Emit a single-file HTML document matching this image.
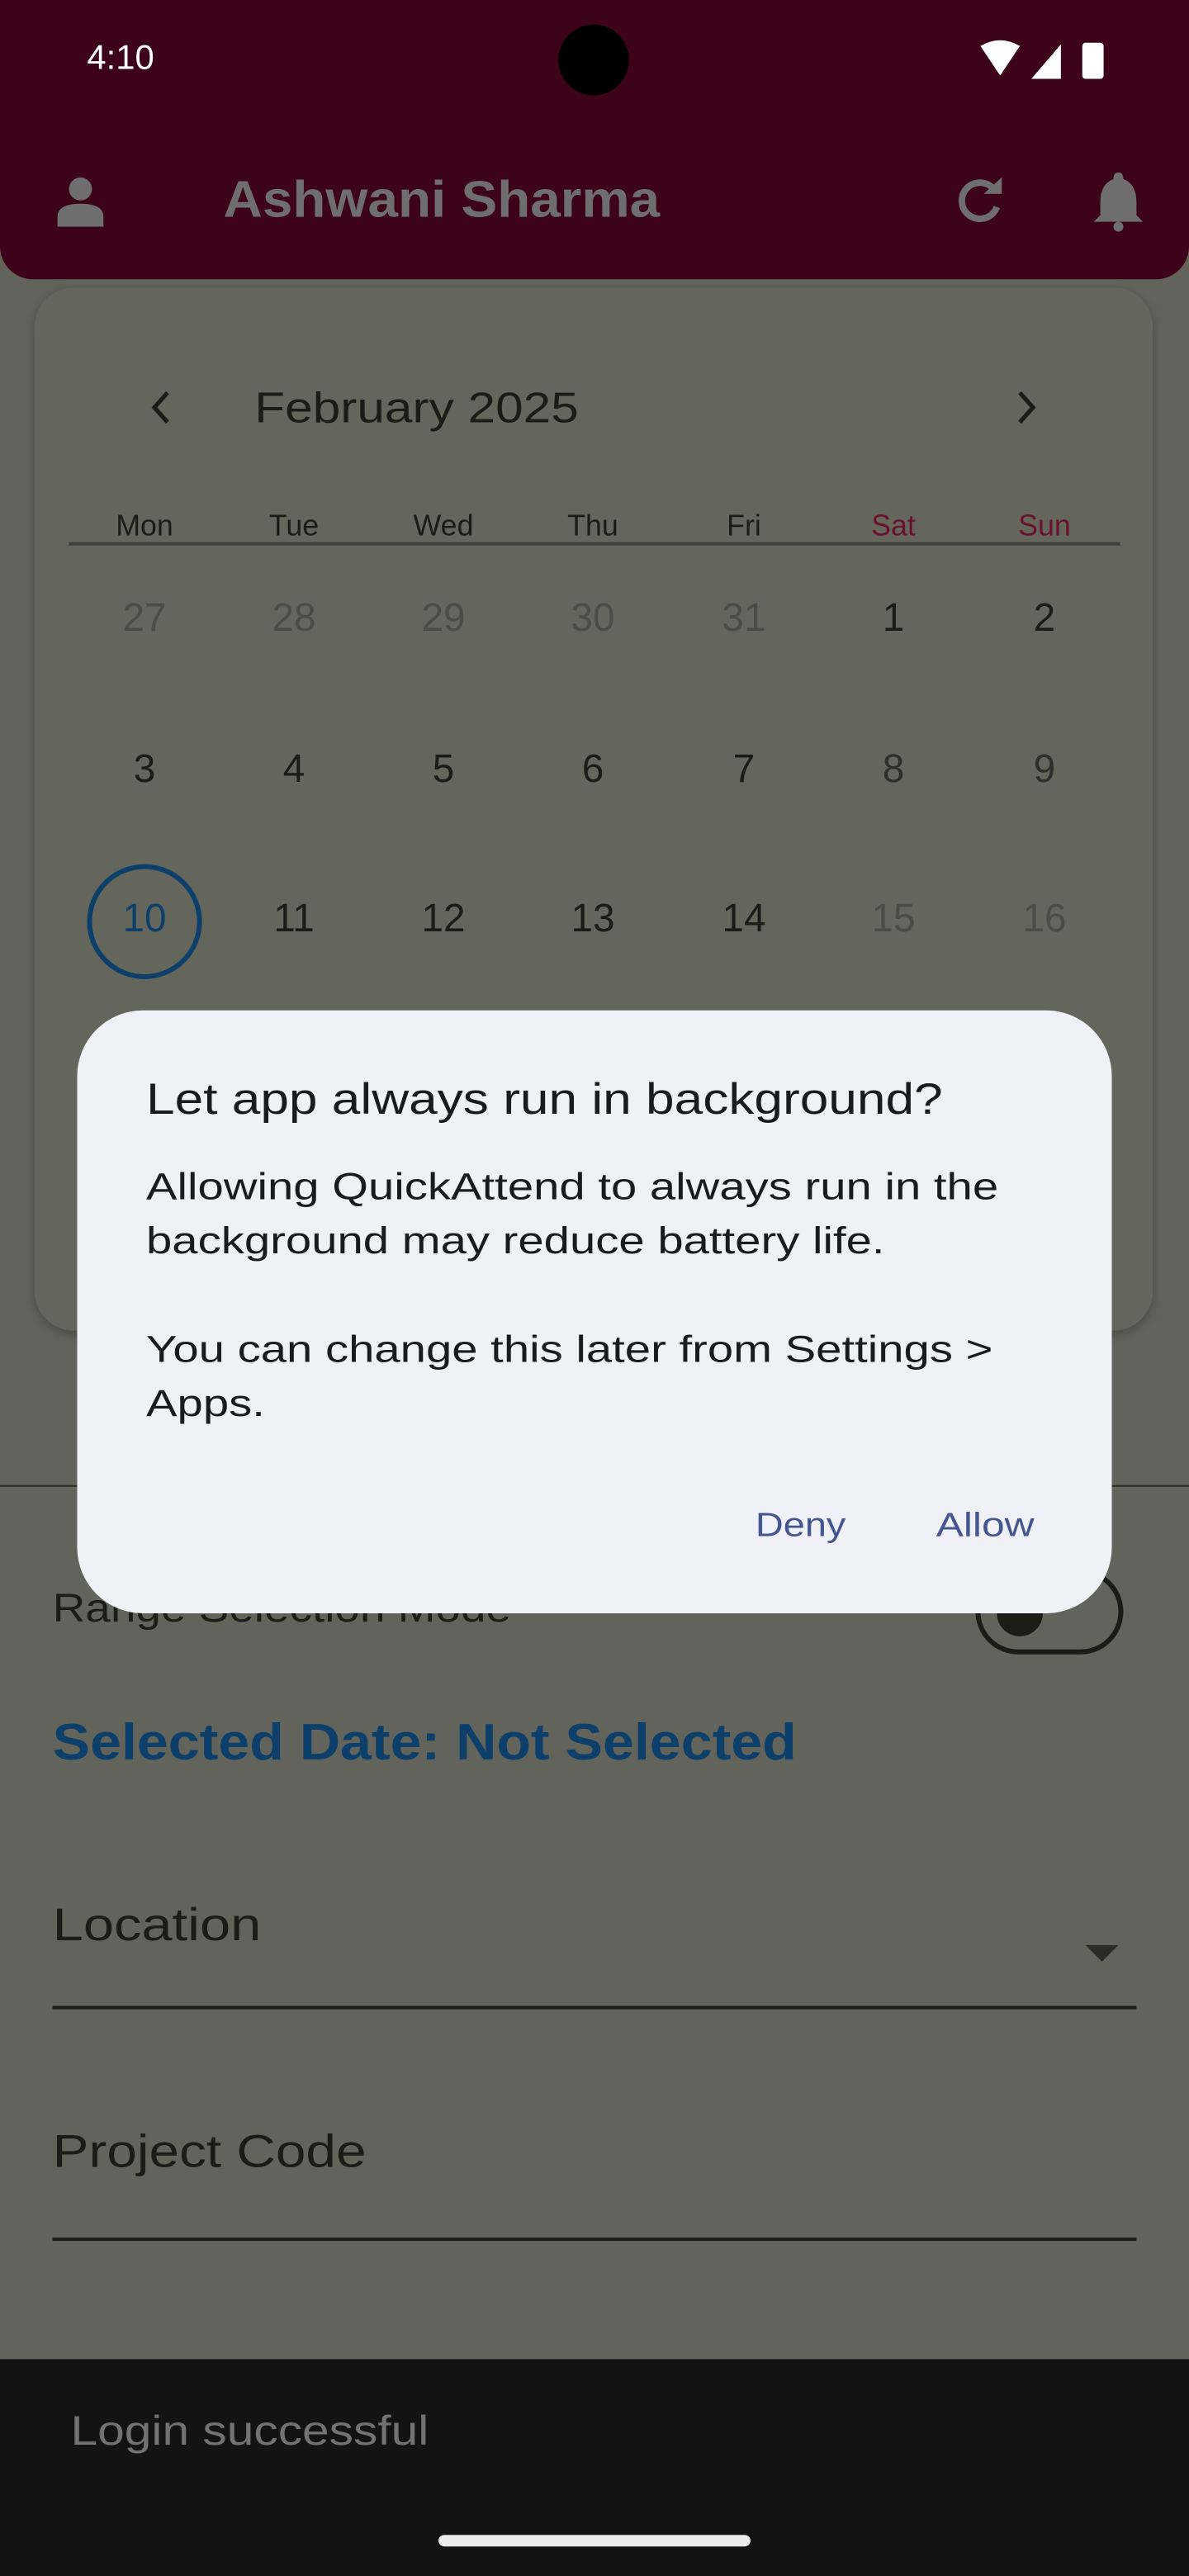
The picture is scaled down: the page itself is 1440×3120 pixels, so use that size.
<!DOCTYPE html>
<html><head><meta charset="utf-8"><style>
html,body{margin:0;padding:0;width:1440px;height:3120px;overflow:hidden;background:#62645b;}
#s{position:absolute;left:0;top:0;width:724px;height:1568px;transform:scale(1.98895,1.9898);transform-origin:0 0;font-family:"Liberation Sans",sans-serif;background:#62645b;overflow:hidden;}
.a{position:absolute;white-space:nowrap;transform-origin:0 0;}
.c{position:absolute;width:60px;text-align:center;line-height:30px;font-size:24px;color:#1b1c18;}
.g{color:#4a4c45;}
.w{font-size:18px;line-height:20px;}
</style></head><body><div id="s">
<div class="a" style="left:0;top:0;width:724px;height:170px;background:#3d0318;border-radius:0 0 20px 20px;"></div>
<div class="a" style="left:53px;top:22px;font-size:21px;color:#fff;line-height:28px;">4:10</div>
<div class="a" style="left:340px;top:15px;width:43px;height:43px;border-radius:50%;background:#000;"></div>
<svg class="a" style="left:596px;top:24px" width="84" height="24" viewBox="0 0 84 24"><path d="M1 4 Q13 -3 25 4 L13 22Z" fill="#fff"/><path d="M32 24 L50 3 V24Z" fill="#fff"/><rect x="63" y="2" width="13" height="22" rx="2" fill="#fff"/></svg>
<svg class="a" style="left:34px;top:106px" width="30" height="32" viewBox="0 0 30 32"><circle cx="15" cy="9" r="7" fill="#6e6e6e"/><path d="M1 32 V26 Q1 18 15 18 Q29 18 29 26 V32Z" fill="#6e6e6e"/></svg>
<div class="a" style="left:136px;top:104px;font-size:31px;font-weight:bold;color:#6e6e6e;line-height:36px;transform:scaleX(1.064);">Ashwani Sharma</div>
<svg class="a" style="left:581px;top:106px" width="32" height="32" viewBox="0 0 32 32"><path d="M24 9 A11 11 0 1 0 26 20" fill="none" stroke="#6e6e6e" stroke-width="4"/><path d="M18 12 L29 12 L29 2Z" fill="#6e6e6e"/></svg>
<svg class="a" style="left:664px;top:103px" width="34" height="40" viewBox="0 0 34 40"><path d="M17 2 Q20 2 20 6 Q28 9 28 20 V28 L32 32 H2 L6 28 V20 Q6 9 14 6 Q14 2 17 2Z" fill="#6e6e6e"/><circle cx="17" cy="35" r="3" fill="#6e6e6e"/></svg>
<div class="a" style="left:21px;top:175px;width:681px;height:635px;background:#64665c;border-radius:24px;box-shadow:0 2px 6px rgba(0,0,0,.25);"></div>
<svg class="a" style="left:88px;top:236px" width="20" height="24" viewBox="0 0 20 24"><path d="M14 3 L6 12 L14 21" fill="none" stroke="#1b1c18" stroke-width="2.6"/></svg>
<svg class="a" style="left:615px;top:236px" width="20" height="24" viewBox="0 0 20 24"><path d="M6 3 L14 12 L6 21" fill="none" stroke="#1b1c18" stroke-width="2.6"/></svg>
<div class="a" style="left:155px;top:232px;font-size:26px;line-height:32px;color:#1b1c18;transform:scaleX(1.167);">February 2025</div>
<div class="c w" style="left:58px;top:310px">Mon</div><div class="c w" style="left:149px;top:310px">Tue</div><div class="c w" style="left:240px;top:310px">Wed</div><div class="c w" style="left:331px;top:310px">Thu</div><div class="c w" style="left:423px;top:310px">Fri</div><div class="c w" style="left:514px;top:310px;color:#6a1030">Sat</div><div class="c w" style="left:606px;top:310px;color:#6a1030">Sun</div>
<div class="a" style="left:42px;top:330px;width:640px;height:2px;background:#3e3f3a;"></div>
<div class="c g" style="left:58px;top:362px">27</div><div class="c g" style="left:149px;top:362px">28</div><div class="c g" style="left:240px;top:362px">29</div><div class="c g" style="left:331px;top:362px">30</div><div class="c g" style="left:423px;top:362px">31</div><div class="c" style="left:514px;top:362px">1</div><div class="c" style="left:606px;top:362px">2</div>
<div class="c" style="left:58px;top:454px">3</div><div class="c" style="left:149px;top:454px">4</div><div class="c" style="left:240px;top:454px">5</div><div class="c" style="left:331px;top:454px">6</div><div class="c" style="left:423px;top:454px">7</div><div class="c" style="left:514px;top:454px;color:#2e2f2a">8</div><div class="c" style="left:606px;top:454px;color:#2e2f2a">9</div>
<div class="a" style="left:53px;top:526px;width:70px;height:70px;border:3px solid #0d3f6b;border-radius:50%;box-sizing:border-box;"></div>
<div class="c" style="left:58px;top:545px;color:#0d3f6b">10</div><div class="c" style="left:149px;top:545px">11</div><div class="c" style="left:240px;top:545px">12</div><div class="c" style="left:331px;top:545px">13</div><div class="c" style="left:423px;top:545px">14</div><div class="c g" style="left:514px;top:545px">15</div><div class="c g" style="left:606px;top:545px">16</div>
<div class="a" style="left:0;top:904px;width:724px;height:1px;background:#2a2b27;"></div>
<div class="a" style="left:32px;top:966px;font-size:24px;line-height:28px;color:#1b1c18;transform:scaleX(1.15);">Range Selection Mode</div>
<div class="a" style="left:594px;top:955px;width:90px;height:52px;border:3px solid #1b1c18;border-radius:26px;box-sizing:border-box;"></div>
<div class="a" style="left:607px;top:968px;width:28px;height:28px;border-radius:50%;background:#1b1c18;"></div>
<div class="a" style="left:32px;top:1043px;font-size:31px;font-weight:bold;line-height:36px;color:#0d3f6b;transform:scaleX(1.105);">Selected Date: Not Selected</div>
<div class="a" style="left:32px;top:1156px;font-size:28px;line-height:32px;color:#1b1c18;transform:scaleX(1.2);">Location</div>
<svg class="a" style="left:660px;top:1183px" width="22" height="12" viewBox="0 0 22 12"><path d="M1 1 H21 L11 11Z" fill="#2a2b27"/></svg>
<div class="a" style="left:32px;top:1221px;width:660px;height:2px;background:#1b1c18;"></div>
<div class="a" style="left:32px;top:1294px;font-size:28px;line-height:32px;color:#1b1c18;transform:scaleX(1.18);">Project Code</div>
<div class="a" style="left:32px;top:1362px;width:660px;height:2px;background:#1b1c18;"></div>
<div class="a" style="left:0;top:1436px;width:724px;height:132px;background:#131313;"></div>
<div class="a" style="left:43px;top:1466px;font-size:25px;line-height:28px;color:#727272;transform:scaleX(1.18);">Login successful</div>
<div class="a" style="left:267px;top:1543px;width:190px;height:7px;border-radius:4px;background:#ececec;"></div>
<div class="a" style="left:47px;top:615px;width:630px;height:367px;background:#f0f0f7;border-radius:40px;"></div>
<div class="a" style="left:89px;top:653px;font-size:26.5px;line-height:32px;color:#1a1b20;transform:scaleX(1.18);">Let app always run in background?</div>
<div class="a" style="left:89px;top:706px;font-size:23px;line-height:33px;color:#1a1b20;transform:scaleX(1.23);">Allowing QuickAttend to always run in the<br>background may reduce battery life.<br><br>You can change this later from Settings &gt;<br>Apps.</div>
<div class="a" style="left:460px;top:915px;font-size:20.5px;line-height:28px;color:#44568f;transform:scaleX(1.15);">Deny</div>
<div class="a" style="left:570px;top:915px;font-size:20.5px;line-height:28px;color:#44568f;transform:scaleX(1.22);">Allow</div>
</div></body></html>
